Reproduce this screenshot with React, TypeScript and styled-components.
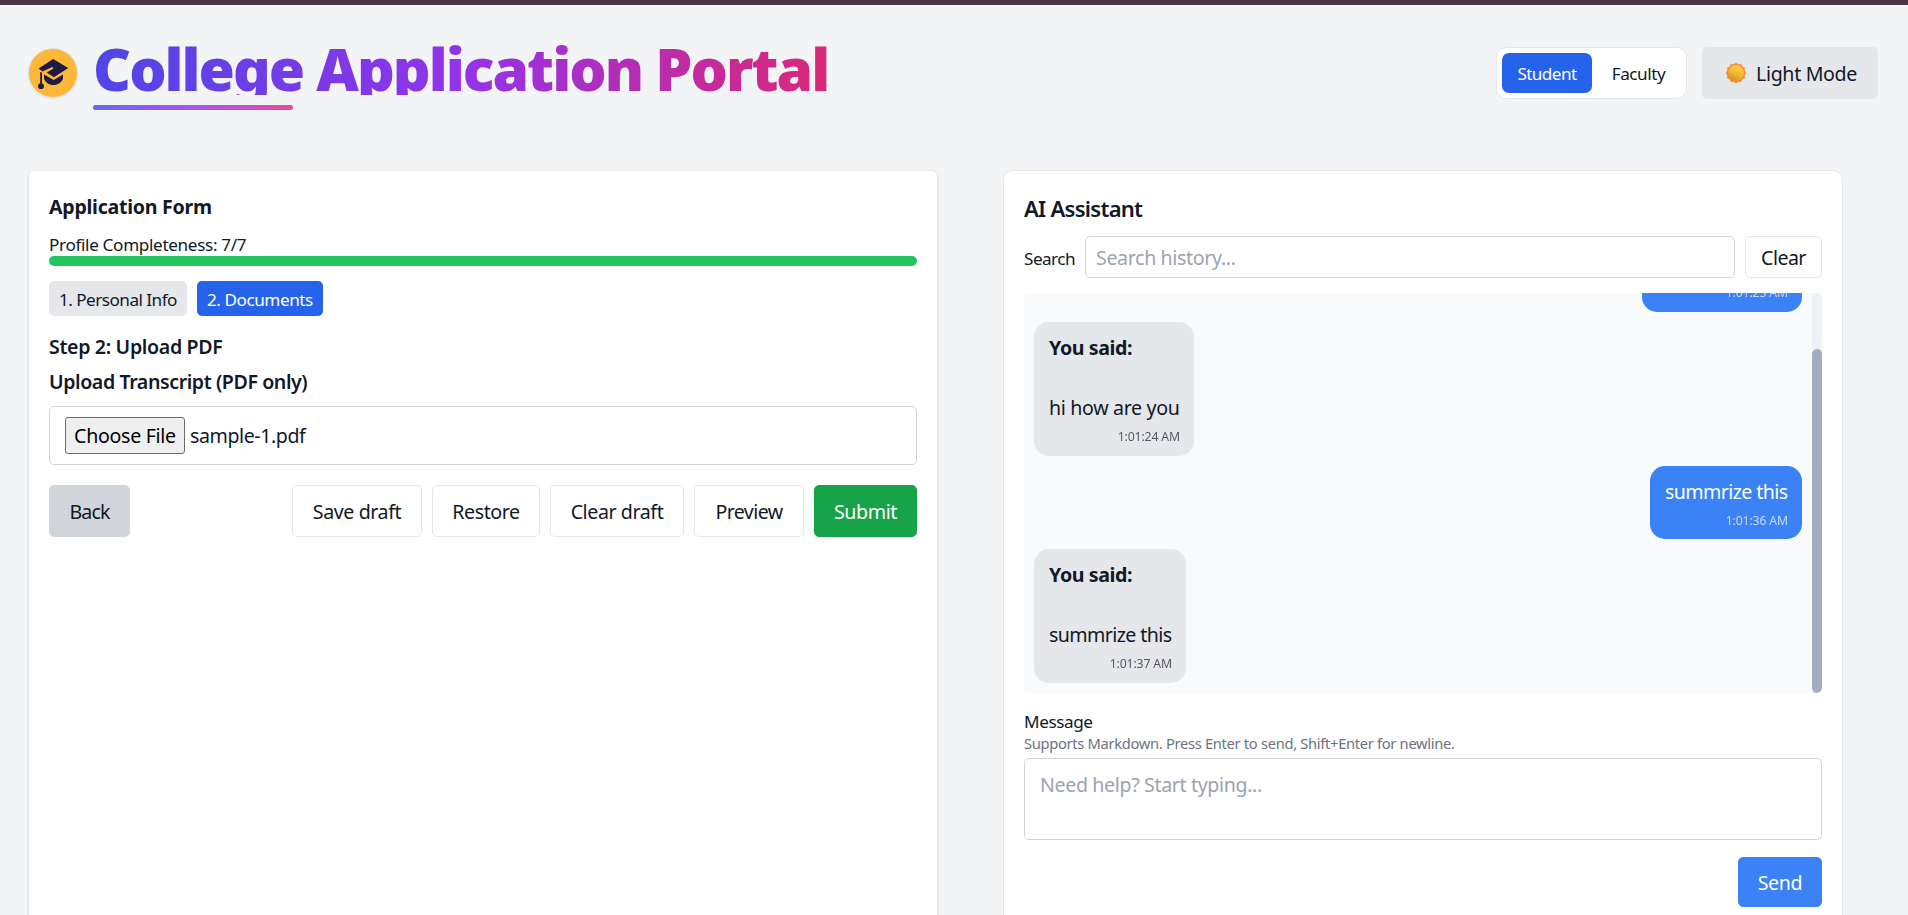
import React from 'react';
import styled, { createGlobalStyle, css } from 'styled-components';

const GlobalStyle = createGlobalStyle`
  *, *::before, *::after { box-sizing: border-box; }
  body {
    margin: 0;
    background: #f3f4f6;
    color: #111827;
    font-family: "Noto Sans", "Open Sans", sans-serif;
    font-size: 19.6px;
    overflow: hidden;
  }
  h1, h2, h3, p { margin: 0; }
  button, input, textarea { font: inherit; color: inherit; }
`;

interface Tracked {
  $track?: number;
}

const tracking = css<Tracked>`
  letter-spacing: ${(p) => p.$track ?? 0}px;
  white-space: nowrap;
`;

const Page = styled.div`
  height: 100vh;
  overflow: hidden;
  border-top: 5px solid #4a3645;
`;

const Header = styled.header`
  display: flex;
  justify-content: space-between;
  align-items: flex-start;
  height: 165px;
  padding: 30px 30px 0 29px;
`;

const Brand = styled.div`
  display: flex;
  gap: 16px;
`;

const Logo = styled.div`
  width: 48px;
  height: 48px;
  margin-top: 14px;
  border-radius: 50%;
  background: #fdb738;
  box-shadow: 0 0 0 1px #dfe1e6, 0 1px 3px rgba(0, 0, 0, 0.12);

  svg { display: block; }
`;

const Title = styled.h1<Tracked>`
  height: 60px;
  padding-top: 5px;
  font-size: 58.8px;
  font-weight: 900;
  line-height: 56px;
  ${tracking}
  color: transparent;
  background: linear-gradient(to right, #4f46e5, #9333ea, #db2777);
  background-clip: text;
  -webkit-background-clip: text;
`;

const TitleRule = styled.div`
  width: 200px;
  height: 5px;
  margin-top: 10px;
  border-radius: 3px;
  background: linear-gradient(to right, #6366f1, #a855f7, #ec4899);
`;

const HeaderActions = styled.div`
  display: flex;
  gap: 15px;
  margin-top: 12px;
`;

const RoleSwitch = styled.div`
  display: flex;
  gap: 4px;
  width: 191px;
  height: 52px;
  padding: 5px;
  border: 1px solid #e5e7eb;
  border-radius: 10px;
  background: #fff;
`;

const RoleOption = styled.button<Tracked & { $active?: boolean }>`
  width: ${(p) => (p.$active ? 90 : 85)}px;
  height: 40px;
  padding: 1px 0 0;
  border: 0;
  border-radius: 7px;
  background: ${(p) => (p.$active ? '#2563eb' : 'transparent')};
  color: ${(p) => (p.$active ? '#fff' : '#111827')};
  font-size: 17.15px;
  ${tracking}
`;

const ThemeButton = styled.button<Tracked>`
  display: flex;
  align-items: center;
  gap: 10px;
  width: 176px;
  height: 52px;
  padding: 0 0 0 24px;
  border: 0;
  border-radius: 5px;
  background: #e5e7eb;
  ${tracking}

  span { padding-top: 1px; }
`;

const Main = styled.main`
  display: flex;
  align-items: flex-start;
`;

const FormCard = styled.section`
  width: 908px;
  height: 800px;
  margin: 1px 0 0 29px;
  padding: 20px;
  border-radius: 5px;
  background: #fff;
  box-shadow: 0 1px 4px rgba(0, 0, 0, 0.1), 0 1px 3px rgba(0, 0, 0, 0.08);
`;

const Heading = styled.h2<Tracked>`
  font-size: 19.6px;
  font-weight: 700;
  line-height: 31px;
  ${tracking}
`;

const SubHeading = styled.h3<Tracked & { $gap: number }>`
  margin-top: ${(p) => p.$gap}px;
  font-size: 19.6px;
  font-weight: 600;
  line-height: 31px;
  ${tracking}
`;

const Completeness = styled.p<Tracked>`
  margin-top: 11px;
  font-size: 17.15px;
  line-height: 23px;
  ${tracking}
`;

const ProgressTrack = styled.div`
  height: 10px;
  border-radius: 5px;
  background: #e5e7eb;
  overflow: hidden;
`;

const ProgressFill = styled.div`
  height: 100%;
  background: #22c55e;
`;

const Steps = styled.div`
  display: flex;
  gap: 10px;
  margin-top: 15px;
`;

const Step = styled.div<Tracked & { $active?: boolean }>`
  width: ${(p) => (p.$active ? 126 : 138)}px;
  height: 35px;
  padding: 2px 10px 0;
  border-radius: 5px;
  background: ${(p) => (p.$active ? '#2563eb' : '#e5e7eb')};
  color: ${(p) => (p.$active ? '#fff' : '#111827')};
  font-size: 17.15px;
  line-height: 33px;
  ${tracking}
`;

const FileField = styled.div`
  display: flex;
  align-items: center;
  gap: 5px;
  height: 59px;
  margin-top: 9px;
  padding: 0 15px;
  border: 1px solid #d1d5db;
  border-radius: 5px;
`;

const ChooseButton = styled.button<Tracked>`
  width: 120px;
  height: 37px;
  padding: 0;
  border: 1px solid #6b6b6b;
  border-radius: 3px;
  background: #efefef;
  color: #000;
  ${tracking}
`;

const FileName = styled.span<Tracked>`
  line-height: 37px;
  ${tracking}
`;

const FormActions = styled.div`
  display: flex;
  justify-content: space-between;
  margin-top: 20px;
`;

const ButtonGroup = styled.div`
  display: flex;
  gap: 10px;
`;

const tones = {
  outline: { bg: '#fff', border: '#e5e7eb', text: '#111827' },
  muted: { bg: '#d1d5db', border: '#d1d5db', text: '#111827' },
  success: { bg: '#16a34a', border: '#16a34a', text: '#fff' },
  primary: { bg: '#3b82f6', border: '#3b82f6', text: '#fff' },
};

const Button = styled.button<Tracked & { $w: number; $h?: number; $tone?: keyof typeof tones }>`
  width: ${(p) => p.$w}px;
  height: ${(p) => p.$h ?? 52}px;
  padding: 1px 0 0;
  border: 1px solid ${(p) => tones[p.$tone ?? 'outline'].border};
  border-radius: 5px;
  background: ${(p) => tones[p.$tone ?? 'outline'].bg};
  color: ${(p) => tones[p.$tone ?? 'outline'].text};
  ${tracking}
`;

const ChatCard = styled.section`
  display: flex;
  flex-direction: column;
  width: 840px;
  height: 800px;
  margin-left: 66px;
  padding: 20px;
  border: 1px solid #e5e7eb;
  border-radius: 10px;
  background: #fff;
`;

const ChatTitle = styled.h2<Tracked>`
  font-size: 22px;
  font-weight: 600;
  line-height: 34px;
  ${tracking}
`;

const SearchRow = styled.div`
  display: flex;
  align-items: center;
  gap: 10px;
  margin-top: 11px;
`;

const SearchLabel = styled.label<Tracked>`
  width: 51px;
  padding-top: 3px;
  font-size: 17.15px;
  ${tracking}
`;

const SearchInput = styled.input<Tracked>`
  flex: 1;
  min-width: 0;
  height: 42px;
  padding: 1px 10px 0;
  border: 1px solid #d1d5db;
  border-radius: 5px;
  outline: 0;
  ${tracking}

  &::placeholder { color: #9ca3af; }
`;

const History = styled.div`
  display: flex;
  flex: none;
  height: 400px;
  margin-top: 15px;
  border-radius: 5px;
  background: #f9fafb;
  overflow: hidden;
`;

const Messages = styled.div`
  display: flex;
  flex: 1;
  flex-direction: column;
  justify-content: flex-end;
  gap: 10px;
  padding: 10px;
`;

const ScrollTrack = styled.div`
  display: flex;
  align-items: flex-end;
  width: 10px;
  background: #edf2f7;
`;

const ScrollThumb = styled.div`
  width: 10px;
  height: 344px;
  border-radius: 5px;
  background: #a0aec0;
`;

const Bubble = styled.div<{ $own?: boolean; $w: number }>`
  flex: none;
  align-self: ${(p) => (p.$own ? 'flex-end' : 'flex-start')};
  width: ${(p) => p.$w}px;
  padding: 10px 14px 9.75px 15px;
  border-radius: 15px;
  background: ${(p) => (p.$own ? '#3b82f6' : '#e5e7eb')};
  color: ${(p) => (p.$own ? '#fff' : '#111827')};
`;

const Quote = styled.p<Tracked>`
  margin-bottom: 29px;
  font-weight: 700;
  line-height: 31px;
  ${tracking}
`;

const BubbleText = styled.p<Tracked>`
  line-height: 31px;
  ${tracking}
`;

const Time = styled.p<Tracked>`
  margin-top: 4px;
  font-size: 12.25px;
  line-height: 19px;
  text-align: right;
  opacity: 0.7;
  ${tracking}
`;

const MessageLabel = styled.label<Tracked>`
  margin-top: 17px;
  font-size: 17.15px;
  line-height: 23px;
  ${tracking}
`;

const Hint = styled.p<Tracked>`
  color: #6b7280;
  font-size: 14.7px;
  line-height: 20px;
  ${tracking}
`;

const Composer = styled.textarea<Tracked>`
  display: block;
  flex: none;
  height: 82px;
  margin-top: 5px;
  padding: 10px 15px;
  border: 1px solid #d1d5db;
  border-radius: 5px;
  outline: 0;
  resize: none;
  line-height: 31px;
  ${tracking}

  &::placeholder { color: #9ca3af; }
`;

const SendRow = styled.div`
  display: flex;
  justify-content: flex-end;
  margin-top: 17px;
`;

const CapIcon = () => (
  <svg width="48" height="48" viewBox="0 0 48 48" fill="#1e1a45">
    <path d="M24.2 10 L39.2 19 L25 28.2 L17.6 23.6 L24.6 19.6 L23.2 17.9 L13.6 22.4 L9.6 19.4 Z" />
    <path d="M15 25.4 L24.6 31 L34 25.4 V29.5 C32.5 33.6 29 36 24.5 36 C20 36 16.3 33.6 15 29.5 Z" />
    <path d="M11.2 23 L13 23.8 V35 H11.2 Z" />
    <circle cx="12" cy="37.2" r="2.9" />
  </svg>
);

const sunRays = Array.from({ length: 24 }, (_, i) => {
  const angle = (i * Math.PI) / 12;
  const r = i % 2 ? 8.8 : 10;
  return `${(10 + r * Math.sin(angle)).toFixed(2)},${(10 - r * Math.cos(angle)).toFixed(2)}`;
}).join(' ');

const SunIcon = () => (
  <svg width="20" height="20" viewBox="0 0 20 20">
    <defs>
      <linearGradient id="sun" x1="0.7" y1="0.1" x2="0.3" y2="1">
        <stop offset="0" stopColor="#fccf3a" />
        <stop offset="0.5" stopColor="#efb92f" />
        <stop offset="1" stopColor="#d58d2a" />
      </linearGradient>
    </defs>
    <polygon points={sunRays} fill="#f68a3a" stroke="#f68a3a" strokeWidth="0.6" strokeLinejoin="round" />
    <circle cx="10" cy="10" r="7.9" fill="url(#sun)" />
  </svg>
);

export default function App() {
  return (
    <>
      <GlobalStyle />
      <Page>
        <Header>
          <Brand>
            <Logo><CapIcon /></Logo>
            <div>
              <Title $track={-2}>College Application Portal</Title>
              <TitleRule />
            </div>
          </Brand>
          <HeaderActions>
            <RoleSwitch>
              <RoleOption $active $track={-0.57}>Student</RoleOption>
              <RoleOption $track={-0.44}>Faculty</RoleOption>
            </RoleSwitch>
            <ThemeButton $track={-0.336}>
              <SunIcon />
              <span>Light Mode</span>
            </ThemeButton>
          </HeaderActions>
        </Header>
        <Main>
          <FormCard>
            <Heading $track={-0.271}>Application Form</Heading>
            <Completeness $track={-0.34}>Profile Completeness: 7/7</Completeness>
            <ProgressTrack><ProgressFill /></ProgressTrack>
            <Steps>
              <Step $track={-0.529}>1. Personal Info</Step>
              <Step $active $track={-0.457}>2. Documents</Step>
            </Steps>
            <SubHeading $gap={15} $track={-0.336}>Step 2: Upload PDF</SubHeading>
            <SubHeading $gap={4} $track={-0.42}>Upload Transcript (PDF only)</SubHeading>
            <FileField>
              <ChooseButton $track={-0.301}>Choose File</ChooseButton>
              <FileName $track={-0.42}>sample-1.pdf</FileName>
            </FileField>
            <FormActions>
              <Button $w={81} $tone="muted" $track={-0.9}>Back</Button>
              <ButtonGroup>
                <Button $w={130} $track={-0.403}>Save draft</Button>
                <Button $w={108} $track={-0.4}>Restore</Button>
                <Button $w={134} $track={-0.415}>Clear draft</Button>
                <Button $w={110} $track={-0.6}>Preview</Button>
                <Button $w={103} $tone="success" $track={-0.398}>Submit</Button>
              </ButtonGroup>
            </FormActions>
          </FormCard>
          <ChatCard>
            <ChatTitle $track={-0.72}>AI Assistant</ChatTitle>
            <SearchRow>
              <SearchLabel htmlFor="search" $track={-0.531}>Search</SearchLabel>
              <SearchInput id="search" placeholder="Search history..." $track={-0.356} />
              <Button $w={77} $h={42} $track={-0.545}>Clear</Button>
            </SearchRow>
            <History>
              <Messages>
                <Bubble $own $w={160}>
                  <BubbleText $track={-0.33}>hi how are you</BubbleText>
                  <Time $track={-0.15}>1:01:23 AM</Time>
                </Bubble>
                <Bubble $w={160}>
                  <Quote $track={-0.397}>You said:</Quote>
                  <BubbleText $track={-0.33}>hi how are you</BubbleText>
                  <Time $track={-0.15}>1:01:24 AM</Time>
                </Bubble>
                <Bubble $own $w={152}>
                  <BubbleText $track={-0.6}>summrize this</BubbleText>
                  <Time $track={-0.15}>1:01:36 AM</Time>
                </Bubble>
                <Bubble $w={152}>
                  <Quote $track={-0.397}>You said:</Quote>
                  <BubbleText $track={-0.6}>summrize this</BubbleText>
                  <Time $track={-0.15}>1:01:37 AM</Time>
                </Bubble>
              </Messages>
              <ScrollTrack><ScrollThumb /></ScrollTrack>
            </History>
            <MessageLabel htmlFor="message" $track={-0.415}>Message</MessageLabel>
            <Hint $track={-0.306}>Supports Markdown. Press Enter to send, Shift+Enter for newline.</Hint>
            <Composer id="message" placeholder="Need help? Start typing..." $track={-0.36} />
            <SendRow>
              <Button $w={84} $h={50} $tone="primary" $track={-0.306}>Send</Button>
            </SendRow>
          </ChatCard>
        </Main>
      </Page>
    </>
  );
}
